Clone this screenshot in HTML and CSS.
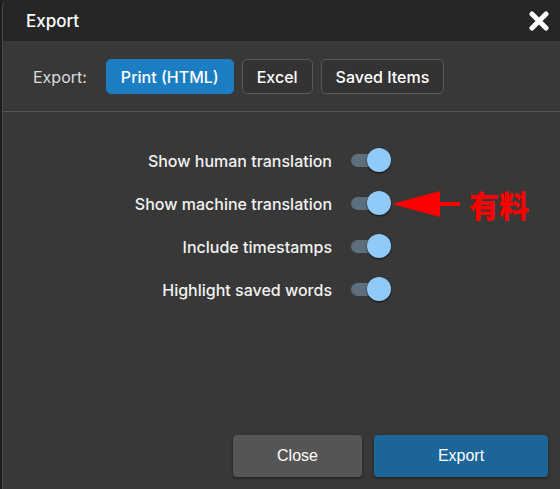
FILE: index.html
```html
<!DOCTYPE html>
<html lang="en">
<head>
    <meta charset="UTF-8">
    <title>Export</title>
    <link rel="stylesheet" href="styles.css">
</head>
<body>
    <div class="dialog">
        <header class="dialog-head">
            <h1>Export</h1>
            <button class="close-x" aria-label="Close">
                <svg width="20" height="20" viewBox="0 0 20 20">
                    <path d="M3 3 L17 17 M17 3 L3 17" stroke="#fff" stroke-width="5" stroke-linecap="round"/>
                </svg>
            </button>
        </header>

        <div class="format-row">
            <span class="format-label">Export:</span>
            <button class="tab active">Print (HTML)</button>
            <button class="tab">Excel</button>
            <button class="tab">Saved Items</button>
        </div>

        <ul class="options">
            <li class="option">
                <span>Show human translation</span>
                <span class="toggle"><i></i></span>
            </li>
            <li class="option">
                <span>Show machine translation</span>
                <span class="toggle"><i></i></span>
                <span class="note">
                    <svg width="68" height="28" viewBox="0 0 68 28">
                        <polygon points="0,14 48,1 48,27" fill="#f00"/>
                        <rect x="46" y="12" width="22" height="4" fill="#f00"/>
                    </svg>
                    <b>有料</b>
                </span>
            </li>
            <li class="option">
                <span>Include timestamps</span>
                <span class="toggle"><i></i></span>
            </li>
            <li class="option">
                <span>Highlight saved words</span>
                <span class="toggle"><i></i></span>
            </li>
        </ul>

        <footer class="dialog-foot">
            <button class="btn btn-close">Close</button>
            <button class="btn btn-export">Export</button>
        </footer>
    </div>
</body>
</html>
```

FILE: styles.css
```css
body {
    margin: 0;
    background: #1e1e1e;
    font-family: Inter, "Open Sans", sans-serif;
    height: 489px;
    overflow: hidden;
}

.dialog {
    margin-left: 2px;
    height: 489px;
    display: flex;
    flex-direction: column;
    background: #383838;
    border-left: 1px solid #4a4a4a;
    border-top-left-radius: 6px;
    overflow: hidden;
}

.dialog-head {
    height: 41px;
    flex-shrink: 0;
    background: #262626;
    display: flex;
    align-items: center;
    justify-content: space-between;
    padding: 0 11px 0 23px;

    h1 {
        margin: 0;
        font-size: 17px;
        font-weight: 500;
        color: #fff;
    }
}

.close-x {
    background: none;
    border: 0;
    padding: 0;
    display: flex;
    cursor: pointer;
}

.format-row {
    display: flex;
    align-items: center;
    gap: 8px;
    padding: 18px 30px 17px;
    border-bottom: 1px solid #555;

    .format-label {
        color: #ddd;
        font-size: 16px;
        margin-right: 11px;
    }
}

.tab {
    height: 35px;
    padding: 0 14px;
    border: 1px solid #5a5a5a;
    border-radius: 5px;
    background: #333;
    color: #fff;
    font-family: inherit;
    font-size: 16px;
    font-weight: 500;

    &.active {
        background: #1c7ec2;
        border-color: #1c7ec2;
    }
}

.options {
    list-style: none;
    margin: 0;
    padding: 27px 0 0;
    flex: 1;
}

.option {
    display: grid;
    grid-template-columns: 329px 42px auto;
    align-items: center;
    column-gap: 19px;
    height: 43px;
    color: #f2f2f2;
    font-size: 16px;
    font-weight: 500;

    > span:first-child {
        text-align: right;
    }
}

.toggle {
    position: relative;
    width: 36px;
    height: 13px;
    border-radius: 7px;
    background: #5d6e7c;

    i {
        position: absolute;
        left: 16px;
        top: -6px;
        width: 24px;
        height: 24px;
        border-radius: 50%;
        background: #90caf9;
        box-shadow: 0 1px 2px rgba(0, 0, 0, 0.7);
    }
}

.note {
    display: flex;
    align-items: center;
    gap: 9px;
    margin-left: -20px;

    b {
        color: #f00;
        font-family: "Noto Sans CJK JP", sans-serif;
        font-size: 30px;
        font-weight: 900;
        line-height: 1;
    }
}

.dialog-foot {
    display: flex;
    justify-content: flex-end;
    gap: 12px;
    padding: 0 12px 12px 0;
}

.btn {
    height: 42px;
    border: 0;
    border-radius: 4px;
    color: #fff;
    font-family: "Liberation Sans", Arial, sans-serif;
    font-size: 16px;
    box-shadow: 0 1px 3px rgba(0, 0, 0, 0.5);
}

.btn-close {
    width: 129px;
    background: #555;
}

.btn-export {
    width: 174px;
    background: #1b6598;
}
```
